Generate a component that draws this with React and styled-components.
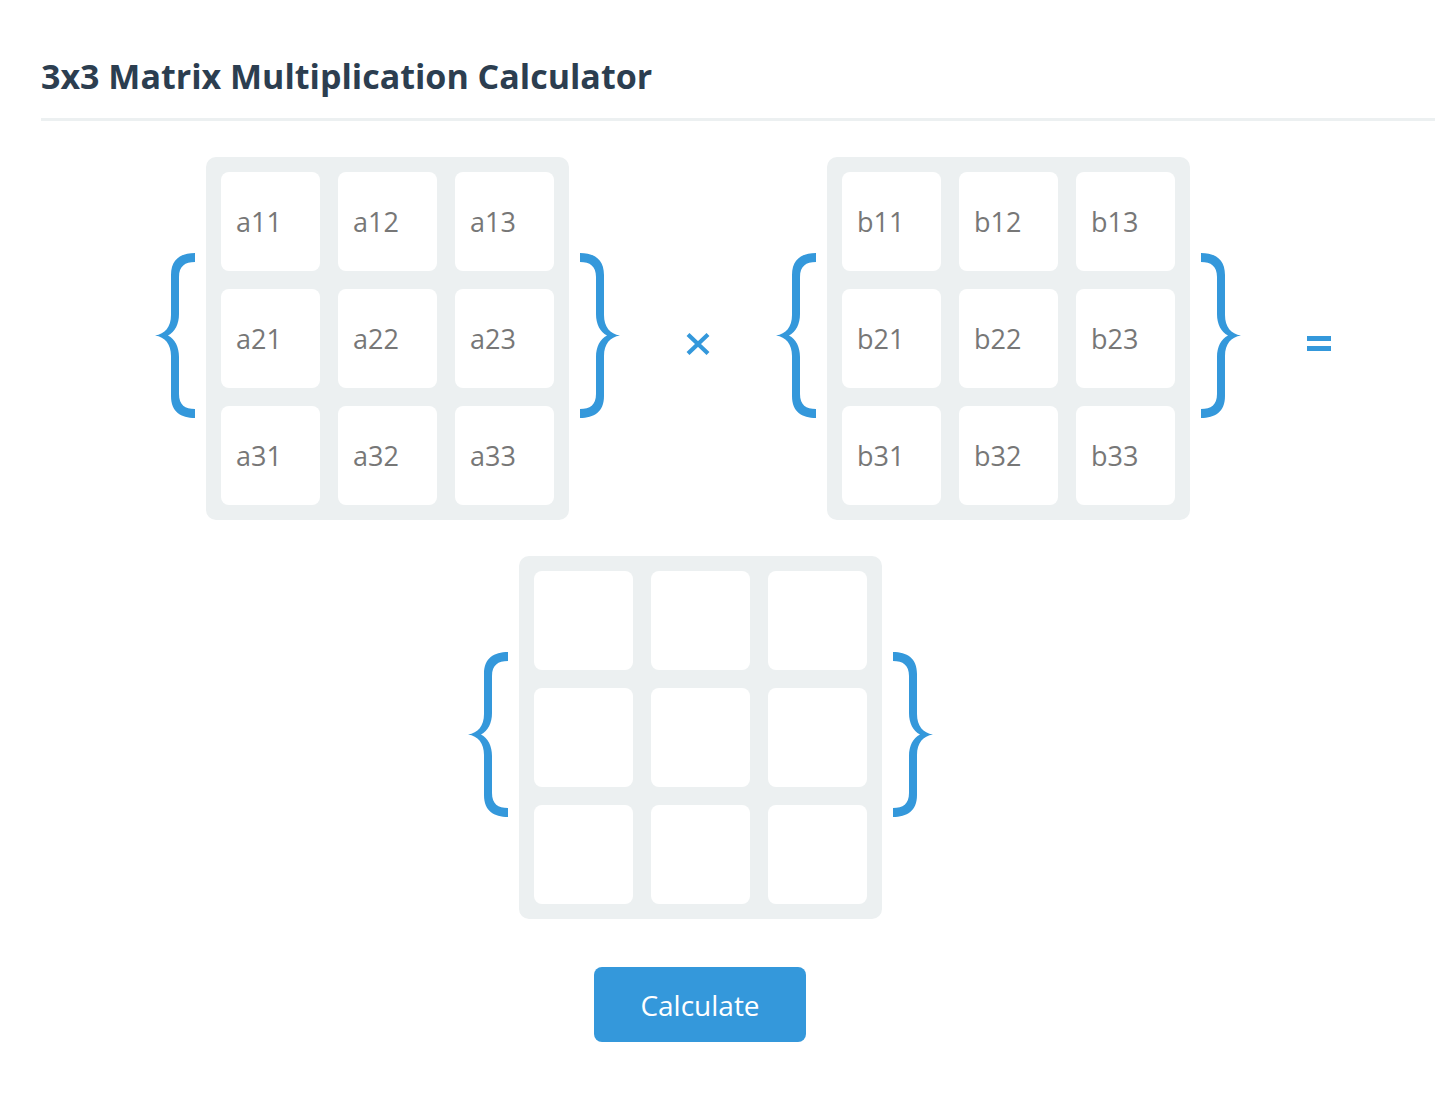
import React from 'react';
import styled, { createGlobalStyle } from 'styled-components';

const GlobalStyle = createGlobalStyle`
  body {
    margin: 0;
    background: #fff;
    font-family: 'Open Sans', 'Noto Sans', sans-serif;
  }
`;

const Page = styled.div`
  padding: 54px 0 0 41px;
`;

const Title = styled.h1`
  margin: 0;
  padding-bottom: 20px;
  border-bottom: 3px solid #ecf0f1;
  font-size: 34px;
  line-height: 44px;
  font-weight: 700;
  color: #2c3e50;
`;

const Content = styled.div`
  width: 1318px;
  display: flex;
  flex-direction: column;
  align-items: center;
`;

const TopRow = styled.div`
  align-self: flex-start;
  margin: 36px 0 0 114px;
  display: flex;
  align-items: center;
`;

const MatrixGroup = styled.div`
  display: flex;
  align-items: center;
  gap: 11px;
  margin-top: ${(p) => p.$top || 0}px;
`;

const BraceIcon = styled.svg`
  display: block;
  margin-bottom: 6px;
`;

const MatrixBox = styled.div`
  display: grid;
  grid-template-columns: repeat(3, 99px);
  grid-auto-rows: 99px;
  gap: 18px;
  padding: 15px;
  background: #ecf0f1;
  border-radius: 10px;
`;

const Cell = styled.input`
  box-sizing: border-box;
  width: 99px;
  height: 99px;
  border: none;
  outline: none;
  border-radius: 8px;
  background: #fff;
  padding: 0 0 0 15px;
  font-family: 'Open Sans', 'Noto Sans', sans-serif;
  font-size: 27px;
  color: #555;

  &::placeholder {
    color: #777;
  }
`;

const Operator = styled.div`
  width: 156px;
  margin-top: 10px;
  display: flex;
  justify-content: center;
  align-items: center;
`;

const Button = styled.button`
  margin-top: 48px;
  width: 212px;
  height: 75px;
  border: none;
  border-radius: 8px;
  background: #3498db;
  color: #fff;
  font-family: 'Open Sans', 'Noto Sans', sans-serif;
  font-size: 28px;
  cursor: pointer;
`;

// drawn as a closing brace; mirrored for the opening one
const Brace = ({ open }) => (
  <BraceIcon width="40" height="165" viewBox="0 0 40 165">
    <path
      transform={open ? 'translate(40 0) scale(-1 1)' : undefined}
      fill="#3498db"
      d="M0 0 C14 0 24 6 24 22 L24 62 C24 74 30 81 40 82.5 C30 84 24 91 24 103 L24 143 C24 159 14 165 0 165 L0 156 C10 156 16 152 16 141 L16 104 C16 94 20 86 27 82.5 C20 79 16 71 16 61 L16 24 C16 13 10 9 0 9 Z"
    />
  </BraceIcon>
);

const Times = () => (
  <svg width="24" height="22" viewBox="0 0 24 22">
    <path d="M2 1.5 L22 20.5 M22 1.5 L2 20.5" stroke="#3498db" strokeWidth="4.2" />
  </svg>
);

const Equals = () => (
  <svg width="24" height="16" viewBox="0 0 24 16">
    <rect x="0" y="0" width="24" height="5" fill="#3498db" />
    <rect x="0" y="10" width="24" height="5" fill="#3498db" />
  </svg>
);

const cells = (prefix) =>
  [1, 2, 3].flatMap((r) => [1, 2, 3].map((c) => (prefix ? `${prefix}${r}${c}` : `${r}${c}`)));

const Matrix = ({ prefix, top }) => (
  <MatrixGroup $top={top}>
    <Brace open />
    <MatrixBox>
      {cells(prefix).map((name) => (
        <Cell key={name} placeholder={prefix ? name : ''} readOnly={!prefix} />
      ))}
    </MatrixBox>
    <Brace />
  </MatrixGroup>
);

const App = () => (
  <Page>
    <GlobalStyle />
    <Title>3x3 Matrix Multiplication Calculator</Title>
    <Content>
      <TopRow>
        <Matrix prefix="a" />
        <Operator>
          <Times />
        </Operator>
        <Matrix prefix="b" />
        <Operator>
          <Equals />
        </Operator>
      </TopRow>
      <Matrix top={36} />
      <Button>Calculate</Button>
    </Content>
  </Page>
);

export default App;
